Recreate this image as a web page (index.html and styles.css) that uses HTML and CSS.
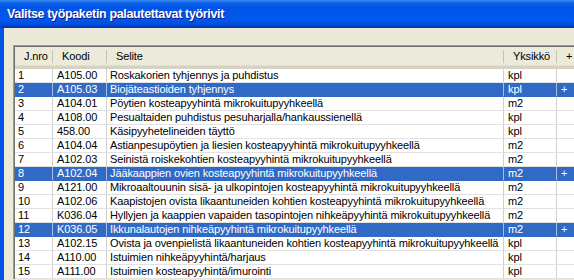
FILE: index.html
```html
<!DOCTYPE html>
<html lang="fi">
<head>
    <meta charset="UTF-8">
    <title>Valitse työpaketin palautettavat työrivit</title>
    <link rel="stylesheet" href="styles.css">
</head>
<body>
    <div class="window">
        <div class="titlebar">
            <span class="title">Valitse työpaketin palautettavat työrivit</span>
        </div>

        <div class="client">
            <div class="grid">
                <table class="rows">
                    <colgroup>
                        <col class="col-nro">
                        <col class="col-koodi">
                        <col class="col-selite">
                        <col class="col-yks">
                        <col class="col-plus">
                    </colgroup>
                    <thead>
                        <tr>
                            <th>J.nro</th>
                            <th>Koodi</th>
                            <th>Selite</th>
                            <th>Yksikkö</th>
                            <th>+</th>
                        </tr>
                    </thead>
                    <tbody>
                        <tr><td>1</td><td>A105.00</td><td>Roskakorien tyhjennys ja puhdistus</td><td>kpl</td><td></td></tr>
                        <tr class="selected"><td>2</td><td>A105.03</td><td>Biojäteastioiden tyhjennys</td><td>kpl</td><td>+</td></tr>
                        <tr><td>3</td><td>A104.01</td><td>Pöytien kosteapyyhintä mikrokuitupyyhkeellä</td><td>m2</td><td></td></tr>
                        <tr><td>4</td><td>A108.00</td><td>Pesualtaiden puhdistus pesuharjalla/hankaussienellä</td><td>kpl</td><td></td></tr>
                        <tr><td>5</td><td>458.00</td><td>Käsipyyhetelineiden täyttö</td><td>kpl</td><td></td></tr>
                        <tr><td>6</td><td>A104.04</td><td>Astianpesupöytien ja liesien kosteapyyhintä mikrokuitupyyhkeellä</td><td>m2</td><td></td></tr>
                        <tr><td>7</td><td>A102.03</td><td>Seinistä roiskekohtien kosteapyyhintä mikrokuitupyyhkeellä</td><td>m2</td><td></td></tr>
                        <tr class="selected"><td>8</td><td>A102.04</td><td>Jääkaappien ovien kosteapyyhintä mikrokuitupyyhkeellä</td><td>m2</td><td>+</td></tr>
                        <tr><td>9</td><td>A121.00</td><td>Mikroaaltouunin sisä- ja ulkopintojen kosteapyyhintä mikrokuitupyyhkeellä</td><td>m2</td><td></td></tr>
                        <tr><td>10</td><td>A102.06</td><td>Kaapistojen ovista likaantuneiden kohtien kosteapyyhintä mikrokuitupyyhkeellä</td><td>m2</td><td></td></tr>
                        <tr><td>11</td><td>K036.04</td><td>Hyllyjen ja kaappien vapaiden tasopintojen nihkeäpyyhintä mikrokuitupyyhkeellä</td><td>m2</td><td></td></tr>
                        <tr class="selected"><td>12</td><td>K036.05</td><td>Ikkunalautojen nihkeäpyyhintä mikrokuitupyyhkeellä</td><td>m2</td><td>+</td></tr>
                        <tr><td>13</td><td>A102.15</td><td>Ovista ja ovenpielistä likaantuneiden kohtien kosteapyyhintä mikrokuitupyyhkeellä</td><td>kpl</td><td></td></tr>
                        <tr><td>14</td><td>A110.00</td><td>Istuimien nihkeäpyyhintä/harjaus</td><td>kpl</td><td></td></tr>
                        <tr><td>15</td><td>A111.00</td><td>Istuimien kosteapyyhintä/imurointi</td><td>kpl</td><td></td></tr>
                    </tbody>
                </table>
            </div>
        </div>
    </div>
</body>
</html>
```

FILE: styles.css
```css
html, body {
    margin: 0;
    padding: 0;
    background-color: #ECE9D8;
    overflow: hidden;
}

.window {
    width: 574px;
    height: 280px;
    overflow: hidden;
    font-family: "Liberation Sans", Arial, sans-serif;
}

.titlebar {
    height: 28px;
    padding-left: 7px;
    background: linear-gradient(#3D8DF5 0, #0A61E6 3px, #0055E5 7px, #0058EE 20px, #004BD6 25px, #003AB0 27px, #00309C 28px);
}

.title {
    display: block;
    line-height: 28px;
    font-size: 12.5px;
    font-weight: bold;
    letter-spacing: -0.35px;
    color: white;
    text-shadow: 1px 1px #0A1883;
    white-space: nowrap;
}

.client {
    height: 252px;
    border-left: 4px solid #0055E5;
    padding: 17px 0 0 9px;
    overflow: hidden;
}

.grid {
    width: 600px;
    border-top: 1px solid #9D9D9D;
    border-left: 1px solid #9D9D9D;
    box-shadow: inset 1px 1px #6F6F6F;
    padding: 1px 0 0 1px;
    background: white;
}

.rows {
    width: 599px;
    table-layout: fixed;
    border-collapse: separate;
    border-spacing: 0;
    font-size: 11px;
    letter-spacing: -0.12px;
    color: black;
}

.col-nro { width: 38px; }
.col-koodi { width: 54px; }
.col-selite { width: 397px; }
.col-yks { width: 53px; }

th {
    height: 19px;
    padding: 0 0 0 9px;
    text-align: left;
    font-weight: normal;
    line-height: 19px;
    background-color: #EBEADB;
    background-image: linear-gradient(#C7C5B2, #C7C5B2);
    background-repeat: no-repeat;
    background-size: 1px 13px;
    background-position: right 3px;
    border-bottom: 3px solid #D6D2C2;
    box-shadow: inset 0 -1px #E2DECD;
    white-space: nowrap;
}

td {
    height: 13px;
    padding: 0 0 0 3px;
    line-height: 13px;
    border-right: 1px solid #D0D0D0;
    border-bottom: 1px solid #E2E2E2;
    white-space: nowrap;
    overflow: hidden;
}

td:nth-child(2),
td:nth-child(4),
td:nth-child(5) {
    padding-left: 4px;
}

tr.selected td {
    background-color: #316AC5;
    color: white;
    border-right-color: #A8BEE6;
    border-bottom-color: #316AC5;
}
```
